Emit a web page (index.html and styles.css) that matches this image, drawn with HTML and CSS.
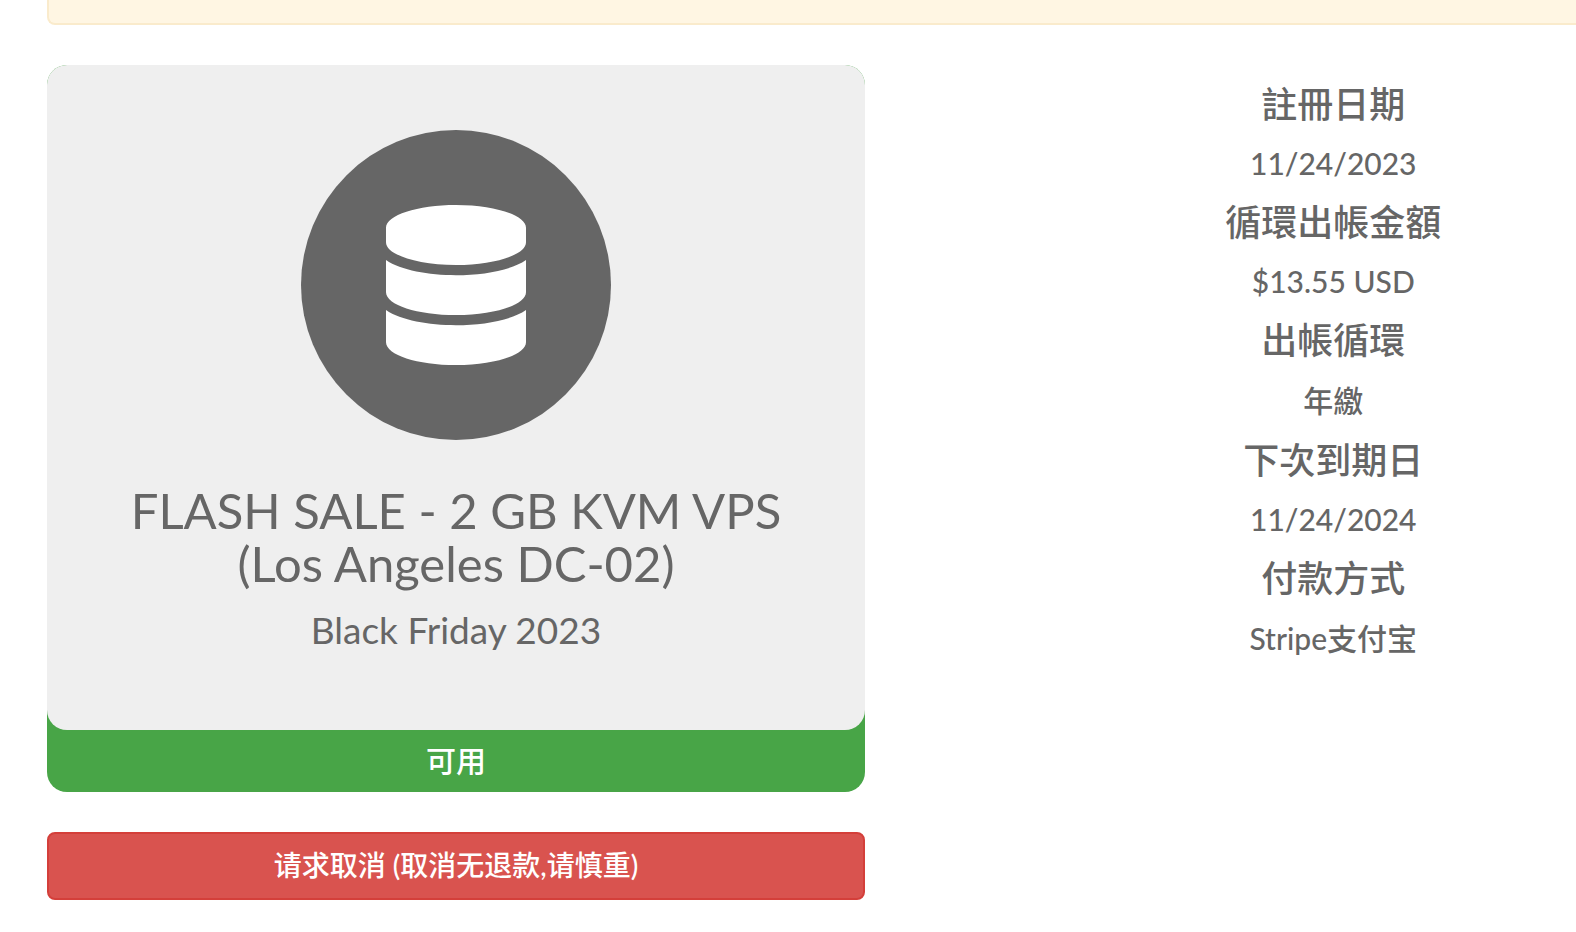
FILE: index.html
```html
<!DOCTYPE html>
<html lang="zh-Hant">
<head>
<meta charset="utf-8">
<meta name="viewport" content="width=device-width, initial-scale=1">
<title>FLASH SALE - 2 GB KVM VPS</title>
<link rel="stylesheet" href="styles.css">
</head>
<body>
<div class="notice"></div>
<main class="product">
  <div class="overview">
    <section class="status-card">
      <div class="summary">
        <svg class="product-icon" viewBox="0 0 310 310" aria-hidden="true">
          <circle cx="155" cy="155" r="155" fill="#666"/>
          <path transform="translate(85 75) scale(.3125)" fill="#fff" d="M448 73.143v45.714C448 159.143 347.667 192 224 192S0 159.143 0 118.857V73.143C0 32.857 100.333 0 224 0s224 32.857 224 73.143zM448 176v102.857C448 319.143 347.667 352 224 352S0 319.143 0 278.857V176c48.125 33.143 136.208 48.572 224 48.572S399.874 209.143 448 176zm0 160v102.857C448 479.143 347.667 512 224 512S0 479.143 0 438.857V336c48.125 33.143 136.208 48.572 224 48.572S399.874 369.143 448 336z"/>
        </svg>
        <h1 class="name">FLASH SALE - 2 GB KVM VPS (Los Angeles DC-02)</h1>
        <h2 class="group">Black Friday 2023</h2>
      </div>
      <p class="status">可用</p>
    </section>
    <button class="cancel" type="button" lang="zh-Hans">请求取消 (取消无退款,请慎重)</button>
  </div>
  <dl class="billing">
    <dt>註冊日期</dt>
    <dd>11/24/2023</dd>
    <dt>循環出帳金額</dt>
    <dd>$13.55 USD</dd>
    <dt>出帳循環</dt>
    <dd class="han">年繳</dd>
    <dt>下次到期日</dt>
    <dd>11/24/2024</dd>
    <dt>付款方式</dt>
    <dd class="han">Stripe支付宝</dd>
  </dl>
</main>
</body>
</html>
```
FILE: styles.css
```css
* {
  box-sizing: border-box;
}

body {
  margin: 0;
  padding-left: 47px;
  background: #fff;
  color: #666;
  font-family: Lato, "Noto Sans CJK TC", sans-serif;
  font-size: 30px;
}

.notice {
  height: 25px;
  margin-bottom: 40px;
  border: 2px solid #faebcc;
  border-width: 0 0 2px 2px;
  border-radius: 0 0 0 8px;
  background: #fff6e3;
}

.product {
  display: grid;
  grid-template-columns: 818fr 711fr;
  align-items: start;
}

.overview {
  display: flex;
  flex-direction: column;
  gap: 40px;
}

.status-card {
  border-radius: 20px;
  background: #48a547;
  text-align: center;
}

.summary {
  display: flex;
  flex-direction: column;
  align-items: center;
  padding: 65px 60px 80px;
  border-radius: 20px;
  background: #efefef;
}

.product-icon {
  width: 310px;
  height: 310px;
}

.name {
  margin: 44px 0 0;
  font-size: 49px;
  font-weight: 400;
  line-height: 53px;
}

.group {
  margin: 20px 0 0;
  font-size: 37px;
  font-weight: 400;
  line-height: 40px;
}

.status {
  margin: 0;
  padding: 9px 10px 11px;
  color: #fff;
  font-weight: 500;
  line-height: 42px;
}

.cancel {
  width: 100%;
  padding: 11px 24px 13px;
  border: 2px solid #d43f3a;
  border-radius: 8px;
  background: #d9534f;
  color: #fff;
  font-family: Lato, "Noto Sans CJK SC", sans-serif;
  font-size: 28px;
  font-weight: 500;
  line-height: 40px;
}

.billing {
  margin: 0;
  padding: 9px 2px 0 32%;
  text-align: center;
}

.billing dt {
  font-size: 36px;
  font-weight: 500;
  line-height: 60px;
}

.billing dd {
  margin: 0;
  font-weight: 500;
  line-height: 58px;
}

.billing .han {
  line-height: 60px;
}
```
